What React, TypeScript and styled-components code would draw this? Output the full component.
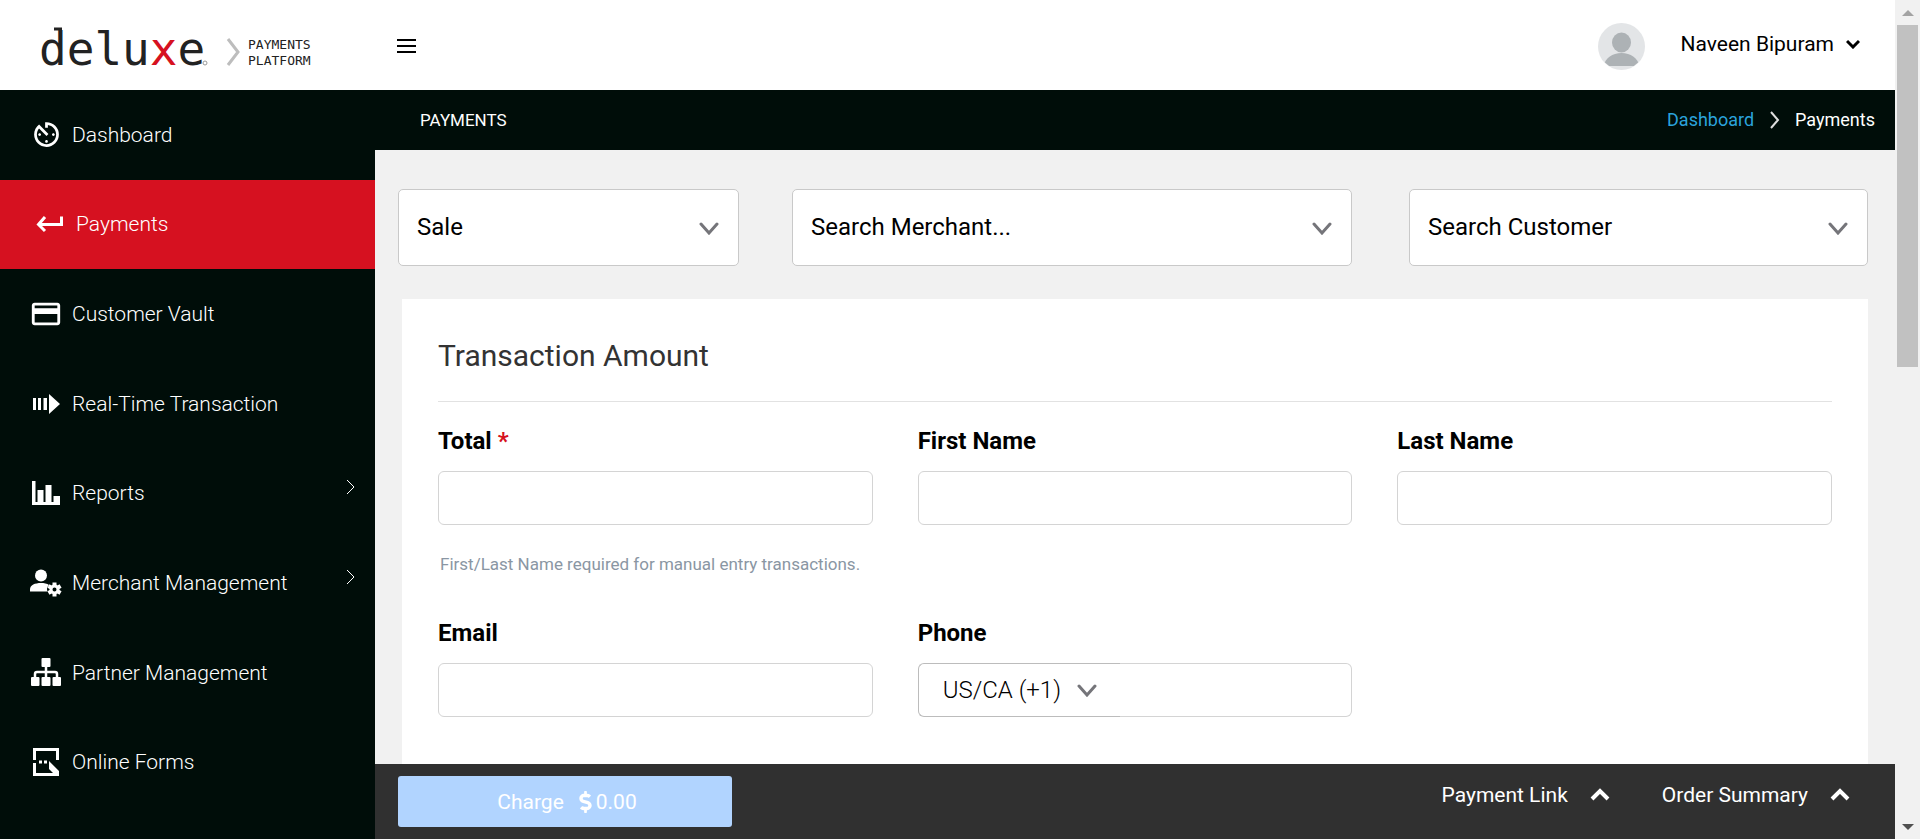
import React from "react";
import styled, { createGlobalStyle } from "styled-components";
import { MdAvTimer, MdCreditCard } from "react-icons/md";
import { FaDollarSign } from "react-icons/fa";

const ink = "#000d09";
const red = "#d61120";

const GlobalStyle = createGlobalStyle`
  * { box-sizing: border-box; }
  body {
    margin: 0;
    font-family: Roboto, "Liberation Sans", sans-serif;
    color: #000;
    background: #f1f1f1;
  }
  button, input, select { font: inherit; color: inherit; }
`;

const Window = styled.div`
  display: flex;
  height: 100vh;
  overflow: hidden;
`;

const Shell = styled.div`
  flex: 1;
  min-width: 0;
  display: flex;
  flex-direction: column;
`;

/* ---------- Header ---------- */

const Header = styled.header`
  flex: none;
  display: flex;
  align-items: center;
  height: 90px;
  padding: 2px 35px 0 36px;
  background: #fff;
`;

const Brand = styled.a`
  display: flex;
  width: 360px;
`;

const MenuButton = styled.button`
  display: flex;
  padding: 0;
  border: 0;
  background: none;
  cursor: pointer;
`;

const Account = styled.div`
  display: flex;
  align-items: center;
  gap: 36px;
  margin-left: auto;
`;

const AccountButton = styled.button`
  display: flex;
  align-items: center;
  gap: 12px;
  padding: 0 0 4px;
  border: 0;
  background: none;
  font-size: 21px;
  line-height: 24px;
  cursor: pointer;
`;

/* ---------- Sidebar ---------- */

const Body = styled.div`
  flex: 1;
  min-height: 0;
  display: flex;
`;

const Sidebar = styled.nav`
  flex: none;
  width: 375px;
  padding-bottom: 32px;
  background: ${ink};
`;

const NavList = styled.ul`
  display: grid;
  grid-template-rows: repeat(8, 1fr);
  height: 100%;
  margin: 0;
  padding: 0;
  list-style: none;
`;

const NavLink = styled.a<{ $active?: boolean }>`
  display: flex;
  align-items: center;
  gap: 8px;
  height: 100%;
  padding: 0 18px 0 ${(p) => (p.$active ? 32 : 28)}px;
  color: #fff;
  background: ${(p) => (p.$active ? red : "transparent")};
  font-size: 21px;
  font-weight: 300;
  line-height: 24px;
  text-decoration: none;
`;

const NavIcon = styled.span`
  display: flex;
  justify-content: center;
  width: 36px;
`;

const NavArrow = styled.span`
  display: flex;
  margin-left: auto;
  padding-bottom: 12px;
`;

/* ---------- Main ---------- */

const Main = styled.main`
  flex: 1;
  min-width: 0;
  display: flex;
  flex-direction: column;
`;

const TitleBar = styled.div`
  flex: none;
  display: flex;
  align-items: center;
  justify-content: space-between;
  height: 60px;
  padding: 0 20px 0 45px;
  color: #fff;
  background: ${ink};
`;

const PageTitle = styled.h1`
  margin: 0;
  font-size: 17px;
  font-weight: 400;
  line-height: 24px;
`;

const Crumbs = styled.nav`
  display: flex;
  align-items: center;
  gap: 15px;
  font-size: 18px;
  line-height: 24px;

  a {
    color: #2ba3dc;
    text-decoration: none;
  }
`;

const Content = styled.div`
  flex: 1;
  min-height: 0;
  overflow: hidden;
  padding: 39px 27px 0 23px;
`;

const Filters = styled.div`
  display: grid;
  grid-template-columns: 341fr 560fr 463fr;
  gap: 53px;
`;

const FilterBox = styled.div`
  position: relative;
  display: flex;

  &:last-child {
    margin-left: 4px;
  }
`;

const FilterSelect = styled.select`
  width: 100%;
  height: 77px;
  padding: 0 56px 2px 18px;
  appearance: none;
  border: 1px solid #c9c9c9;
  border-radius: 5px;
  background: #fff;
  font-size: 24px;
`;

const SelectArrow = styled.span<{ $right: number }>`
  position: absolute;
  top: 0;
  bottom: 0;
  right: ${(p) => p.$right}px;
  display: flex;
  align-items: center;
  pointer-events: none;
`;

const Card = styled.section`
  margin: 33px 0 0 4px;
  min-height: 700px;
  padding: 37px 36px 0;
  background: #fff;
`;

const CardTitle = styled.h2`
  margin: 0 0 21px;
  padding-bottom: 25px;
  border-bottom: 1px solid #e2e2e2;
  color: #333;
  font-size: 30px;
  font-weight: 400;
  line-height: 40px;
`;

const FieldGrid = styled.div`
  display: grid;
  grid-template-columns: repeat(3, 1fr);
  column-gap: 45px;
`;

const Field = styled.div`
  display: flex;
  flex-direction: column;
  gap: 12px;
`;

const Label = styled.label`
  font-size: 24px;
  font-weight: 700;
  line-height: 36px;

  span {
    color: ${red};
  }
`;

const Input = styled.input`
  width: 100%;
  height: 54px;
  padding: 0 16px;
  border: 1px solid #d4d4d4;
  border-radius: 6px;
  background: #fff;
  font-size: 24px;
`;

const Hint = styled.p`
  margin: 27px 0 39px 2px;
  color: #8a96a3;
  font-size: 17px;
  line-height: 24px;
`;

const PhoneRow = styled.div`
  display: flex;
`;

const CountryBox = styled.div`
  position: relative;
  flex: none;
  width: 202px;
`;

const CountrySelect = styled.select`
  width: 100%;
  height: 54px;
  padding: 0 48px 0 24px;
  appearance: none;
  border: 1px solid #bcbcbc;
  border-right: 0;
  border-radius: 6px 0 0 6px;
  background: #fff;
  font-size: 24px;
  font-weight: 300;
`;

const PhoneInput = styled(Input)`
  flex: 1;
  min-width: 0;
  border-left: 0;
  border-radius: 0 6px 6px 0;
`;

/* ---------- Footer ---------- */

const ActionBar = styled.footer`
  flex: none;
  display: flex;
  align-items: flex-start;
  height: 75px;
  padding: 12px 45px 0 23px;
  background: #303030;
  color: #fff;
`;

const ChargeButton = styled.button`
  display: flex;
  align-items: center;
  justify-content: center;
  width: 334px;
  height: 51px;
  margin-right: auto;
  padding: 0 0 0 4px;
  border: 0;
  border-radius: 3px;
  background: #b1d4ff;
  color: #fff;
  font-size: 21px;
  line-height: 24px;

  svg {
    width: 13px;
    height: 22px;
    margin: 0 4px 0 15px;
  }
`;

const PanelButton = styled.button`
  display: flex;
  align-items: center;
  gap: 22px;
  margin: 7px 0 0 52px;
  padding: 0;
  border: 0;
  background: none;
  color: #fff;
  font-size: 21px;
  line-height: 24px;
  cursor: pointer;
`;

/* ---------- Scrollbar ---------- */

const Scrollbar = styled.div`
  flex: none;
  display: flex;
  flex-direction: column;
  align-items: center;
  width: 25px;
  background: #f1f1f1;
`;

const ScrollEnd = styled.div`
  display: flex;
  align-items: center;
  justify-content: center;
  height: 25px;
`;

const ScrollTrack = styled.div`
  flex: 1;
  width: 21px;
`;

const ScrollThumb = styled.div`
  height: 43.4%;
  background: #c1c1c1;
`;

/* ---------- Drawings ---------- */

const Logo = () => (
  <svg width="284" height="88" viewBox="36 2 284 88" role="img" aria-label="deluxe payments platform">
    <text x="39" y="65" fontFamily='"DejaVu Sans Mono", monospace' fontSize="46" fill="#222">
      delu<tspan fill={red}>x</tspan>e
    </text>
    <path d="M54 29h8" stroke="#222" strokeWidth="3" />
    <circle cx="205" cy="63" r="2" fill="none" stroke="#999" strokeWidth="1" />
    <path d="M228 39l10 13-10 13" fill="none" stroke="#bdbdbd" strokeWidth="3" />
    <g fontFamily='"DejaVu Sans Mono", monospace' fontSize="13" fill="#222">
      <text x="248" y="49">PAYMENTS</text>
      <text x="248" y="65">PLATFORM</text>
    </g>
  </svg>
);

const MenuIcon = () => (
  <svg width="21" height="16" viewBox="0 0 21 16" aria-hidden="true">
    <path d="M1 2h19M1 8h19M1 14h19" stroke="#000" strokeWidth="2" />
  </svg>
);

const Avatar = () => (
  <svg width="47" height="47" viewBox="0 0 47 47" aria-hidden="true">
    <clipPath id="face"><circle cx="23.5" cy="23.5" r="23" /></clipPath>
    <circle cx="23.5" cy="23.5" r="23.5" fill="#e3e5e7" />
    <ellipse cx="23.5" cy="19.5" rx="9.5" ry="10" fill="#adb2b5" />
    <path d="M5 43c3-8 9-13 18.500-13s15.500 5 18.500 13z" fill="#adb2b5" clipPath="url(#face)" />
  </svg>
);

type ChevronProps = { w: number; h: number; d: string; color: string; stroke: number; round?: boolean };
const Chevron = ({ w, h, d, color, stroke, round }: ChevronProps) => (
  <svg width={w} height={h} viewBox={`0 0 ${w} ${h}`} fill="none" aria-hidden="true">
    <path d={d} stroke={color} strokeWidth={stroke} strokeLinecap={round ? "round" : "butt"} />
  </svg>
);
const SelectChevron = () => <Chevron w={20} h={14} d="M2 3l8 9 8-9" color="#75757a" stroke={3} round />;
const UpChevron = () => <Chevron w={20} h={14} d="M2 11l8-8 8 8" color="#fff" stroke={4} />;
const NavChevron = () => <Chevron w={12} h={18} d="M2 2l7 7-7 7" color="#fff" stroke={1} />;

const ReturnIcon = () => (
  <svg width="28" height="18" viewBox="0 0 28 18" fill="none" aria-hidden="true">
    <path d="M25.500 1.500v8H3M9 2L2.500 9.500 9 16" stroke="#fff" strokeWidth="3" />
  </svg>
);

const StreamIcon = () => (
  <svg width="28" height="20" viewBox="0 0 28 20" fill="#fff" aria-hidden="true">
    <path d="M1 4h3v12H1zM6 4h3v12H6zM11.500 4h3.500v12h-3.500zM17 0l11 10-11 10z" />
  </svg>
);

const ChartIcon = () => (
  <svg width="28" height="24" viewBox="0 0 28 24" fill="#fff" aria-hidden="true">
    <path d="M0 0h3.500v21h2V9h6v12h2V4h6v17h2v-6h6.500v9H0z" />
  </svg>
);

const UserGearIcon = () => (
  <svg width="32" height="28" viewBox="0 0 32 28" fill="#fff" aria-hidden="true">
    <circle cx="11" cy="6.500" r="6" />
    <path d="M0 22.500v-2C0 16 5 14 11 14c3 0 6 .5 8 2-2 2-2.500 4-1.500 6.500z" />
    <g transform="translate(24.500 20.500)" stroke="#fff">
      <circle r="3.500" fill="none" strokeWidth="3" />
      <g strokeWidth="4">
        <path d="M0-7v3M0 4v3" />
        <path d="M0-7v3M0 4v3" transform="rotate(60)" />
        <path d="M0-7v3M0 4v3" transform="rotate(120)" />
      </g>
    </g>
  </svg>
);

const TreeIcon = () => (
  <svg width="30" height="30" viewBox="0 0 30 30" fill="#fff" aria-hidden="true">
    <rect x="10.500" y="0" width="9" height="9" rx="1" />
    <rect x="0" y="19" width="8.500" height="9" rx="1" />
    <rect x="10.500" y="19" width="9" height="9" rx="1" />
    <rect x="21.500" y="19" width="8.500" height="9" rx="1" />
    <path d="M15 8v12M4 20v-4q0-2 2-2h18q2 0 2 2v4" fill="none" stroke="#fff" strokeWidth="2.500" />
  </svg>
);

const FormIcon = () => (
  <svg width="26" height="28" viewBox="0 0 26 28" fill="#fff" aria-hidden="true">
    <path d="M0 0h26v12h-3V3H3v9H0zM0 15h3v10h17l-4-4v-8l10 10v5H0z" />
    <path d="M6 12.500h3v3H6zM11 12.500h3v3h-3z" />
  </svg>
);

const navItems = [
  { label: "Dashboard", icon: <MdAvTimer size={33} /> },
  { label: "Payments", icon: <ReturnIcon />, active: true },
  { label: "Customer Vault", icon: <MdCreditCard size={34} /> },
  { label: "Real-Time Transaction", icon: <StreamIcon /> },
  { label: "Reports", icon: <ChartIcon />, nested: true },
  { label: "Merchant Management", icon: <UserGearIcon />, nested: true },
  { label: "Partner Management", icon: <TreeIcon /> },
  { label: "Online Forms", icon: <FormIcon /> },
];

const Filter = ({ label }: { label: string }) => (
  <FilterBox>
    <FilterSelect aria-label={label}>
      <option>{label}</option>
    </FilterSelect>
    <SelectArrow $right={20}><SelectChevron /></SelectArrow>
  </FilterBox>
);

const TextField = ({ id, label, required }: { id: string; label: string; required?: boolean }) => (
  <Field>
    <Label htmlFor={id}>{label}{required && <span> *</span>}</Label>
    <Input id={id} type="text" />
  </Field>
);

export default function App() {
  return (
    <Window>
      <GlobalStyle />
      <Shell>
        <Header>
          <Brand href="#home"><Logo /></Brand>
          <MenuButton aria-label="Toggle menu"><MenuIcon /></MenuButton>
          <Account>
            <Avatar />
            <AccountButton>
              Naveen Bipuram
              <Chevron w={14} h={10} d="M1 2l6 6 6-6" color="#000" stroke={3} />
            </AccountButton>
          </Account>
        </Header>
        <Body>
          <Sidebar aria-label="Main">
            <NavList>
              {navItems.map((item) => (
                <li key={item.label}>
                  <NavLink href="#nav" $active={item.active}>
                    <NavIcon>{item.icon}</NavIcon>
                    {item.label}
                    {item.nested && <NavArrow><NavChevron /></NavArrow>}
                  </NavLink>
                </li>
              ))}
            </NavList>
          </Sidebar>
          <Main>
            <TitleBar>
              <PageTitle>PAYMENTS</PageTitle>
              <Crumbs aria-label="Breadcrumb">
                <a href="#dashboard">Dashboard</a>
                <Chevron w={11} h={18} d="M2 1l7 8-7 8" color="#ddd" stroke={2} />
                <span>Payments</span>
              </Crumbs>
            </TitleBar>
            <Content>
              <Filters>
                <Filter label="Sale" />
                <Filter label="Search Merchant..." />
                <Filter label="Search Customer" />
              </Filters>
              <Card>
                <CardTitle>Transaction Amount</CardTitle>
                <FieldGrid>
                  <TextField id="total" label="Total" required />
                  <TextField id="first" label="First Name" />
                  <TextField id="last" label="Last Name" />
                </FieldGrid>
                <Hint>First/Last Name required for manual entry transactions.</Hint>
                <FieldGrid>
                  <TextField id="email" label="Email" />
                  <Field>
                    <Label htmlFor="phone">Phone</Label>
                    <PhoneRow>
                      <CountryBox>
                        <CountrySelect aria-label="Country code">
                          <option>US/CA (+1)</option>
                        </CountrySelect>
                        <SelectArrow $right={23}><SelectChevron /></SelectArrow>
                      </CountryBox>
                      <PhoneInput id="phone" type="tel" />
                    </PhoneRow>
                  </Field>
                </FieldGrid>
              </Card>
            </Content>
            <ActionBar>
              <ChargeButton>
                Charge
                <FaDollarSign />
                0.00
              </ChargeButton>
              <PanelButton>Payment Link<UpChevron /></PanelButton>
              <PanelButton>Order Summary<UpChevron /></PanelButton>
            </ActionBar>
          </Main>
        </Body>
      </Shell>
      <Scrollbar aria-hidden="true">
        <ScrollEnd>
          <svg width="12" height="6" viewBox="0 0 12 6"><path d="M6 0l6 6H0z" fill="#a3a3a3" /></svg>
        </ScrollEnd>
        <ScrollTrack><ScrollThumb /></ScrollTrack>
        <ScrollEnd>
          <svg width="12" height="6" viewBox="0 0 12 6"><path d="M0 0h12L6 6z" fill="#505050" /></svg>
        </ScrollEnd>
      </Scrollbar>
    </Window>
  );
}
